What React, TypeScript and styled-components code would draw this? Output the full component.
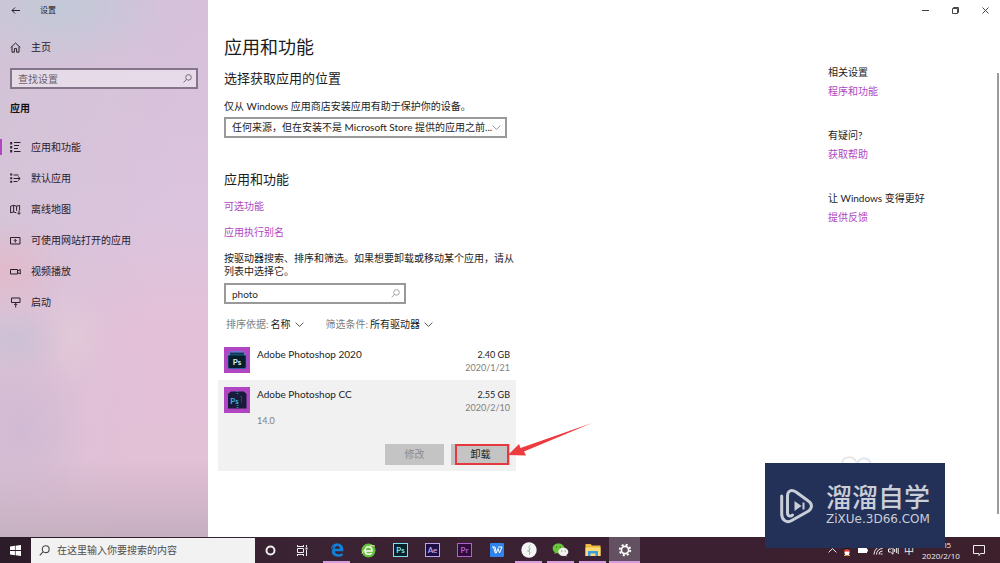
import React from 'react';
import styled, { createGlobalStyle, css } from 'styled-components';

const ACCENT = '#b146c2';

const GlobalStyle = createGlobalStyle`
  * { box-sizing: border-box; }
  body {
    margin: 0;
    background: #fff;
    color: #1c1c1c;
    font: 10px/13px Lato, "Noto Sans CJK SC", sans-serif;
  }
  button, input, select { font: inherit; color: inherit; border: 0; margin: 0; padding: 0; border-radius: 0; background: none; }
  h1, h2, h3, p, ul { margin: 0; padding: 0; font-weight: 400; }
  ul { list-style: none; }
  svg { display: block; flex: none; }
`;

const Desktop = styled.div`
  position: relative;
  display: flex;
  flex-direction: column;
  min-height: 100vh;
`;

const SettingsWindow = styled.div`
  display: flex;
  flex: 1;
`;

/* ---------- sidebar ---------- */

const Sidebar = styled.nav`
  width: 208px;
  flex: none;
  color: #2a2029;
  background:
    linear-gradient(to top, rgba(190, 172, 186, 0.75), rgba(200, 176, 194, 0.5) 36px, rgba(200, 176, 194, 0) 76px),
    radial-gradient(ellipse 110px 60px at 60px 8px, rgba(192, 202, 216, 0.9), rgba(192, 202, 216, 0) 100%),
    radial-gradient(ellipse 60px 50px at 8px 270px, rgba(228, 184, 200, 0.8), rgba(228, 184, 200, 0) 100%),
    radial-gradient(ellipse 50px 34px at 16px 340px, rgba(200, 192, 212, 0.8), rgba(200, 192, 212, 0) 100%),
    radial-gradient(ellipse 36px 50px at 72px 335px, rgba(226, 204, 216, 0.7), rgba(226, 204, 216, 0) 100%),
    radial-gradient(ellipse 70px 90px at 20px 430px, rgba(206, 184, 210, 0.8), rgba(206, 184, 210, 0) 100%),
    linear-gradient(100deg, rgba(210, 196, 214, 0.8), rgba(216, 196, 216, 0) 70%),
    linear-gradient(to bottom, #d6c0da, #dcc4de 40%, #e4c0d8 62%, #e2c0d6 85%, #dcbcd2);
`;

const TitleBar = styled.div`
  display: flex;
  align-items: center;
  height: 21px;
`;

const BackButton = styled.button`
  width: 30px;
  height: 21px;
  display: grid;
  place-items: center;
`;

const WindowName = styled.span`
  padding-left: 10px;
  font-size: 8px;
`;

const NavLink = styled.a<{ $current?: boolean }>`
  display: flex;
  align-items: center;
  gap: 10px;
  height: 31px;
  padding-left: 8px;
  border-left: 2px solid transparent;
  color: inherit;
  text-decoration: none;
  ${(p) =>
    p.$current &&
    css`
      border-image: linear-gradient(transparent 7px, ${ACCENT} 7px, ${ACCENT} 23px, transparent 23px) 0 0 0 2;
    `}
`;

const HomeArea = styled.div`
  padding: 11px 0 5px;
`;

const SearchField = styled.div<{ $soft?: boolean }>`
  display: flex;
  align-items: center;
  height: 21px;
  padding: 0 4px 0 6px;
  border: 2px solid ${(p) => (p.$soft ? '#85758a' : '#999')};
  background: ${(p) => (p.$soft ? 'rgba(255,255,255,0.4)' : '#fff')};
  color: ${(p) => (p.$soft ? '#6d606e' : '#999')};
  input {
    flex: 1;
    min-width: 0;
    height: 17px;
    outline: none;
    color: #2a2a2a;
  }
  input::placeholder { color: #6d606e; opacity: 1; }
`;

const SidebarSearch = styled.div`
  padding: 0 10px;
`;

const SidebarHeading = styled.h2`
  padding: 13px 10px 17px;
  font-size: 10px;
  font-weight: 700;
  color: #111;
`;

/* ---------- main pane ---------- */

const Main = styled.main`
  display: flex;
  flex: 1;
  flex-direction: column;
  min-width: 0;
`;

const Caption = styled(TitleBar)`
  justify-content: flex-end;
  color: #444;
`;

const CaptionButton = styled.button`
  width: 30px;
  height: 21px;
  display: grid;
  place-items: center;
`;

const Body = styled.div`
  display: flex;
  flex: 1;
  justify-content: space-between;
`;

const Content = styled.div`
  width: 308px;
  padding: 13px 0 40px 10px;
`;

const Block = styled.div`
  padding-left: 6px;
`;

const PageTitle = styled.h1`
  font-size: 18px;
  line-height: 26px;
`;

const SectionTitle = styled.h2`
  font-size: 13px;
  line-height: 18px;
`;

const TopSection = styled.section`
  padding-top: 9px;
  p { margin: 13px 0 4px; }
`;

const SelectBox = styled.div<{ $boxed?: boolean }>`
  display: flex;
  align-items: center;
  color: ${(p) => (p.$boxed ? '#999' : '#555')};
  ${(p) =>
    p.$boxed &&
    css`
      width: 283px;
      height: 21px;
      border: 2px solid #999;
    `}
  svg { pointer-events: none; margin: 0 4px 0 auto; }
`;

const Select = styled.select<{ $width: number }>`
  appearance: none;
  width: ${(p) => p.$width}px;
  height: 17px;
  color: #1c1c1c;
  white-space: nowrap;
  outline: none;
`;

const SourceSelect = styled(Select)`
  padding-left: 6px;
  flex: none;
`;

const FeatureSection = styled.section`
  padding-top: 32px;
`;

const Link = styled.a`
  display: block;
  width: max-content;
  color: ${ACCENT};
  text-decoration: none;
`;

const LinkList = styled.div`
  display: grid;
  gap: 13px;
  padding: 12px 0 13px;
`;

const Hint = styled.p`
  width: 292px;
  margin-bottom: 5px;
`;

const AppSearch = styled.div`
  width: 182px;
`;

const Filters = styled.div`
  display: flex;
  gap: 18px;
  padding: 12px 0 7px 2px;
`;

const Filter = styled.div`
  display: flex;
  align-items: center;
  gap: 2px;
  label { color: #808080; }
`;

const AppRow = styled.li<{ $selected?: boolean }>`
  display: grid;
  grid-template-columns: 26px 1fr auto;
  column-gap: 7px;
  padding: 7px 6px 6px;
  background: ${(p) => (p.$selected ? '#f1f1f1' : 'transparent')};
`;

const AppIcon = styled.span`
  display: grid;
  place-items: center;
  width: 26px;
  height: 26px;
  background: ${ACCENT};
`;

const AppName = styled.div`
  padding-top: 1px;
`;

const Muted = styled.div`
  color: #808080;
`;

const Version = styled(Muted)`
  padding-top: 13px;
  font-size: 9px;
`;

const Figures = styled.div`
  padding-top: 1px;
  font-size: 9px;
  text-align: right;
`;

const Actions = styled.div`
  grid-column: 1 / -1;
  display: flex;
  justify-content: flex-end;
  gap: 7px;
  padding-top: 17px;
`;

const ActionButton = styled.button`
  position: relative;
  width: 59px;
  height: 21px;
  background: #c4c4c4;
  &:disabled { color: #8c8c8c; }
`;

const RedFrame = styled.span`
  position: absolute;
  inset: 0 1px 0 4px;
  border: 2px solid #e5383f;
`;

const RedArrow = styled.svg`
  position: absolute;
  left: 56px;
  top: -22px;
`;

const Related = styled.aside`
  display: flex;
  margin-left: auto;
  width: 172px;
`;

const RelatedGroups = styled.div`
  flex: 1;
  padding-top: 45px;
`;

const RelatedGroup = styled.section`
  margin-bottom: 31px;
  h3 { font-size: 10px; line-height: 13px; margin-bottom: 6px; }
`;

const ScrollThumb = styled.div`
  width: 2px;
  margin: 52px 1px 23px 0;
  background: #9b9b9b;
`;

/* ---------- taskbar ---------- */

const Taskbar = styled.footer`
  display: flex;
  align-items: stretch;
  height: 26px;
  color: #eee;
  background: linear-gradient(to right, #2c1b28, #3a2333 30%, #3b2032 70%, #3d202c);
`;

const StartButton = styled.button`
  width: 31px;
  display: grid;
  place-items: center;
`;

const TaskSearch = styled.label`
  display: flex;
  align-items: center;
  gap: 7px;
  width: 224px;
  margin: 1px 0 0;
  padding-left: 8px;
  background: #f2f2f2;
  color: #444;
  input { flex: 1; min-width: 0; outline: none; }
  input::placeholder { color: #4c4c4c; opacity: 1; }
`;

const TaskGroup = styled.div`
  display: flex;
  gap: 1px;
`;

const PinnedGroup = styled(TaskGroup)`
  margin-left: 3px;
`;

const TaskButton = styled.button<{ $running?: boolean; $active?: boolean }>`
  display: grid;
  place-items: center;
  width: 31px;
  background: ${(p) => (p.$active ? '#635060' : 'transparent')};
  ${(p) =>
    p.$running &&
    css`
      background-image: linear-gradient(#d79be0, #d79be0);
      background-size: ${p.$active ? 31 : 27}px 2px;
      background-repeat: no-repeat;
      background-position: center bottom;
    `}
`;

const AdobeTile = styled.span<{ $tone: string; $fill: string }>`
  width: 15px;
  height: 14px;
  border: 1px solid ${(p) => p.$tone};
  background: ${(p) => p.$fill};
  color: ${(p) => p.$tone};
  font-size: 8px;
  line-height: 12px;
  font-weight: 700;
  text-align: center;
`;

const Tray = styled.div`
  display: flex;
  align-items: center;
  margin-left: auto;
  padding-right: 15px;
`;

const TrayIcons = styled.div`
  display: flex;
  align-items: center;
  gap: 5px;
`;

const Clock = styled.div`
  width: 54px;
  margin: 0 5px 0 0;
  font-family: "Open Sans", sans-serif;
  font-size: 8px;
  line-height: 11px;
  text-align: center;
`;

/* ---------- watermark ---------- */

const Watermark = styled.div`
  position: absolute;
  right: 55px;
  bottom: 15px;
  display: flex;
  align-items: center;
  gap: 12px;
  width: 180px;
  height: 85px;
  padding-left: 15px;
  background: #233057;
  color: #c9ced8;
`;

const WatermarkText = styled.div`
  padding-bottom: 4px;
`;

const WatermarkName = styled.div`
  font: 500 26px/28px "Noto Sans CJK SC", sans-serif;
`;

const WatermarkUrl = styled.div`
  padding-top: 2px;
  font: 12px/14px "DejaVu Sans", sans-serif;
`;

const WatermarkCloud = styled.svg`
  position: absolute;
  right: 126px;
  bottom: 99px;
`;

/* ---------- icons ---------- */

const Line = ({ children, w = 11, h = 11, sw = 1 }: { children: React.ReactNode; w?: number; h?: number; sw?: number }) => (
  <svg width={w} height={h} viewBox={`0 0 ${w} ${h}`} fill="none" stroke="currentColor" strokeWidth={sw} aria-hidden="true">
    {children}
  </svg>
);

const Magnifier = ({ size = 9 }: { size?: number }) => (
  <svg width={size} height={size} viewBox="0 0 9 9" fill="none" stroke="currentColor" strokeWidth="0.9" aria-hidden="true">
    <circle cx="5.5" cy="3.4" r="2.8" />
    <path d="M3.5 5.4 0.6 8.4" />
  </svg>
);

const Chevron = () => (
  <Line w={9} h={5}><path d="M0.6 0.6 4.5 4.4 8.4 0.6" /></Line>
);

const icons = {
  home: <Line><path d="M0.7 5.6 5.5 1l4.8 4.6M2 4.6v5.6h2.4V6.6h2.2v3.6H9V4.6" /></Line>,
  apps: <Line><path d="M1.2 0v2.400M1.200 4v2.400M1.200 8v2.400" strokeWidth="2" /><path d="M4 .5h6.500M4 3.500h5M4 6.500h4M4 9.500h6.500" /></Line>,
  defaults: <Line><path d="M1.200 .6v2M1.200 4.200v2M1.200 7.800v2" strokeWidth="2" /><path d="M3.500 2h5M3.500 5.500h6.500M3.500 8.500h4M8 3.500l2.200 2L8 7.500" /></Line>,
  maps: <Line><path d="M.6 2.200 3.600 1.400l3 .8 3-.8v5M.6 2.200v6.600l3-.8 2.600.7M3.600 1.400V8M6.600 2.200v4.600M9 6.600v3.600M7.400 8.700 9 10.300l1.600-1.600" /></Line>,
  sites: <Line><path d="M.5 2.500h9.500v6.500H.5zM5.300 7.600V4.500M3.900 5.800l1.400-1.400 1.400 1.400" /></Line>,
  video: <Line><path d="M.5 3.500h7v4.500h-7zM7.500 5l2.800-1.500V8L7.500 6.500" /></Line>,
  startup: <Line><path d="M1.500 1h8.500v4.500H1.500zM5.700 5.500" /><path d="M5.700 10.500v-4M4.200 8l1.500-1.500L7.200 8" /></Line>,
};

const BoxPhotoshop2020 = () => (
  <svg width="20" height="18" viewBox="0 0 20 18" aria-hidden="true">
    <path d="M3 1h14M1.500 3.200h17" stroke="#2aa5e8" strokeWidth="1.2" />
    <path d="M3 1.6h14V4H3z" fill="#12384f" />
    <rect x="1" y="4" width="18" height="13.5" rx="1.5" fill="#071d29" stroke="#1f7fb8" strokeWidth="0.6" />
    <text x="10" y="13.6" textAnchor="middle" fontSize="8" fontWeight="700" fill="#d8f1fb">Ps</text>
  </svg>
);

const BoxPhotoshopCC = () => (
  <svg width="20" height="20" viewBox="0 0 20 20" aria-hidden="true">
    <path d="M1 4 4 1.500h13L19.500 4v14.500H1z" fill="#191b3a" />
    <path d="M10.500 1v4M10.500 15v4" stroke="#2c7898" strokeWidth="2" strokeDasharray="1 1" />
    <path d="M13 6.500h1.500v6" stroke="#3b3f63" fill="none" />
    <text x="7.5" y="14" textAnchor="middle" fontSize="8" fontWeight="700" fill="#35b6e8">Ps</text>
  </svg>
);

const EdgeIcon = () => (
  <svg width="14" height="14" viewBox="0 0 14 14" aria-hidden="true">
    <path fill="#1180d8" d="M.8 6.4C1.4 2.6 4 .6 7.2.6c4 0 6.2 2.7 6.2 6v1.6H4.7c.1 2 1.9 3 4 3 1.500 0 2.900-.4 4-1v2.500c-1.300.7-2.900 1-4.600 1-3.900 0-6.300-2.100-6.300-5.200 0-2.200 1.300-4 3.300-5C3.300 4 1.700 5 .8 6.400ZM4.800 5.800h4.900c0-1.700-.8-2.700-2.300-2.700-1.400 0-2.400 1.100-2.600 2.700Z" />
  </svg>
);

const GreenBrowser = () => (
  <svg width="15" height="15" viewBox="0 0 15 15" aria-hidden="true">
    <circle cx="7.500" cy="7.500" r="7" fill="#65c23c" />
    <path d="M4 8h7c.2-2.600-1.300-4.200-3.500-4.200S4 5.500 4 7.600s1.500 3.700 3.700 3.700c1.300 0 2.300-.5 3-1.300" fill="none" stroke="#fff" strokeWidth="1.600" />
    <path d="M1 10.500C3 5 9 1.500 14 3" fill="none" stroke="#d9f3a0" />
  </svg>
);

const WpsIcon = () => (
  <svg width="14" height="14" viewBox="0 0 14 14" aria-hidden="true">
    <rect width="14" height="14" rx="1" fill="#2f83ea" />
    <path d="M2 4h3l1.300 6L8 5.500 9.500 10 12 4H8M3.500 4l1.800 6h1" fill="none" stroke="#fff" />
  </svg>
);

const WhiteDisc = () => (
  <svg width="16" height="16" viewBox="0 0 16 16" aria-hidden="true">
    <circle cx="8" cy="8" r="7.700" fill="#f4f6f6" />
    <path d="M9.500 2.500 7.500 5.500l2 1-2.500 2M8.500 6v7M6 8.500l3.500 2" fill="none" stroke="#a9bdb8" />
  </svg>
);

const WeChat = () => (
  <svg width="17" height="14" viewBox="0 0 17 14" aria-hidden="true">
    <path d="M6.500.6C3.200.6.700 2.700.700 5.400c0 1.500.8 2.800 2.100 3.700l-.5 1.800 2.100-1c3.700 1 7.900-1 7.900-4.500C12.300 2.700 9.800.600 6.500.600Z" fill="#68c63a" />
    <path d="M11.400 4.800c-2.900 0-5.100 1.800-5.100 4.100 0 2.700 3.100 4.700 6.600 3.800l1.800.9-.4-1.500c1.200-.8 2-1.900 2-3.200 0-2.300-2.200-4.100-4.900-4.100Z" fill="#f0f3ec" />
    <path d="M4.500 3.500v1M8.200 3.500v1" stroke="#2c5a1d" />
    <path d="M9.800 7.500v1M13.200 7.500v1" stroke="#6c6c6c" />
  </svg>
);

const Explorer = () => (
  <svg width="16" height="14" viewBox="0 0 16 14" aria-hidden="true">
    <path d="M.5 1h5l1.500 1.500h8.500V13H.5z" fill="#f0b93c" />
    <path d="M.5 4.500h15V13H.5z" fill="#fbdc78" />
    <path d="M3 13V8h10v5h-2.500v-2.500h-5V13z" fill="#3a9be0" />
  </svg>
);

const Gear = () => (
  <svg width="14" height="14" viewBox="0 0 14 14" fill="none" stroke="#fff" aria-hidden="true">
    <circle cx="7" cy="7" r="3.600" strokeWidth="1.700" />
    <circle cx="7" cy="7" r="5.300" strokeWidth="1.800" strokeDasharray="2.080 2.080" />
  </svg>
);

const navItems = [
  { icon: icons.apps, label: '应用和功能', current: true },
  { icon: icons.defaults, label: '默认应用' },
  { icon: icons.maps, label: '离线地图' },
  { icon: icons.sites, label: '可使用网站打开的应用' },
  { icon: icons.video, label: '视频播放' },
  { icon: icons.startup, label: '启动' },
];

const related = [
  { title: '相关设置', link: '程序和功能' },
  { title: '有疑问?', link: '获取帮助' },
  { title: '让 Windows 变得更好', link: '提供反馈' },
];

const pinned = [
  { name: 'Edge', icon: <EdgeIcon />, running: true },
  { name: '浏览器', icon: <GreenBrowser /> },
  { name: 'Photoshop', icon: <AdobeTile $tone="#7fe0ee" $fill="#06222c">Ps</AdobeTile> },
  { name: 'After Effects', icon: <AdobeTile $tone="#b9a2ee" $fill="#1e0f45">Ae</AdobeTile> },
  { name: 'Premiere', icon: <AdobeTile $tone="#b45fd0" $fill="#2c0d3c">Pr</AdobeTile> },
  { name: 'WPS', icon: <WpsIcon /> },
  { name: '工具', icon: <WhiteDisc />, running: true },
  { name: '微信', icon: <WeChat />, running: true },
  { name: '文件资源管理器', icon: <Explorer />, running: true },
  { name: '设置', icon: <Gear />, running: true, active: true },
];

export default function App() {
  return (
    <>
      <GlobalStyle />
      <Desktop>
        <SettingsWindow>
          <Sidebar>
            <TitleBar>
              <BackButton aria-label="返回"><Line w={9} h={7}><path d="M9 3.500H1M4 .5l-3 3 3 3" /></Line></BackButton>
              <WindowName>设置</WindowName>
            </TitleBar>
            <HomeArea><NavLink href="#home">{icons.home}主页</NavLink></HomeArea>
            <SidebarSearch>
              <SearchField $soft>
                <input aria-label="查找设置" placeholder="查找设置" />
                <Magnifier />
              </SearchField>
            </SidebarSearch>
            <SidebarHeading>应用</SidebarHeading>
            {navItems.map((n) => (
              <NavLink key={n.label} href="#apps" $current={n.current}>{n.icon}{n.label}</NavLink>
            ))}
          </Sidebar>

          <Main>
            <Caption>
              <CaptionButton aria-label="最小化"><Line w={7} h={7}><path d="M0 3.500h7" /></Line></CaptionButton>
              <CaptionButton aria-label="还原"><Line w={7} h={7}><path d="M.5 1.500h5v5h-5zM1.500 1.500v-1h5v5h-1" /></Line></CaptionButton>
              <CaptionButton aria-label="关闭"><Line w={7} h={7}><path d="M.5.5l6 6M6.500.5l-6 6" /></Line></CaptionButton>
            </Caption>
            <Body>
              <Content>
                <Block>
                  <PageTitle>应用和功能</PageTitle>
                  <TopSection>
                    <SectionTitle>选择获取应用的位置</SectionTitle>
                    <p>仅从 Windows 应用商店安装应用有助于保护你的设备。</p>
                    <SelectBox $boxed>
                      <SourceSelect $width={266} aria-label="选择获取应用的位置">
                        <option>任何来源，但在安装不是 Microsoft Store 提供的应用之前...</option>
                      </SourceSelect>
                      <Chevron />
                    </SelectBox>
                  </TopSection>
                  <FeatureSection>
                    <SectionTitle>应用和功能</SectionTitle>
                    <LinkList>
                      <Link href="#optional">可选功能</Link>
                      <Link href="#alias">应用执行别名</Link>
                    </LinkList>
                    <Hint>按驱动器搜索、排序和筛选。如果想要卸载或移动某个应用，请从列表中选择它。</Hint>
                    <AppSearch>
                      <SearchField>
                        <input aria-label="搜索此列表" defaultValue="photo" />
                        <Magnifier />
                      </SearchField>
                    </AppSearch>
                    <Filters>
                      <Filter>
                        <label htmlFor="sort">排序依据:</label>
                        <SelectBox><Select id="sort" $width={24}><option>名称</option></Select><Chevron /></SelectBox>
                      </Filter>
                      <Filter>
                        <label htmlFor="drive">筛选条件:</label>
                        <SelectBox><Select id="drive" $width={54}><option>所有驱动器</option></Select><Chevron /></SelectBox>
                      </Filter>
                    </Filters>
                  </FeatureSection>
                </Block>
                <ul>
                  <AppRow>
                    <AppIcon><BoxPhotoshop2020 /></AppIcon>
                    <AppName>Adobe Photoshop 2020</AppName>
                    <Figures>2.40 GB<Muted>2020/1/21</Muted></Figures>
                  </AppRow>
                  <AppRow $selected>
                    <AppIcon><BoxPhotoshopCC /></AppIcon>
                    <AppName>Adobe Photoshop CC<Version>14.0</Version></AppName>
                    <Figures>2.55 GB<Muted>2020/2/10</Muted></Figures>
                    <Actions>
                      <ActionButton disabled>修改</ActionButton>
                      <ActionButton>
                        卸载
                        <RedFrame />
                        <RedArrow width="86" height="36" viewBox="0 0 86 36" aria-hidden="true">
                          <path d="M1 33 12 22l1.500 4L85 1 17 29.500l2 4z" fill="#ee3b40" />
                        </RedArrow>
                      </ActionButton>
                    </Actions>
                  </AppRow>
                </ul>
              </Content>
              <Related>
                <RelatedGroups>
                  {related.map((r) => (
                    <RelatedGroup key={r.title}>
                      <h3>{r.title}</h3>
                      <Link href="#related">{r.link}</Link>
                    </RelatedGroup>
                  ))}
                </RelatedGroups>
                <ScrollThumb />
              </Related>
            </Body>
          </Main>
        </SettingsWindow>

        <Taskbar>
          <StartButton aria-label="开始">
            <svg width="11" height="11" viewBox="0 0 11 11" fill="#fff" aria-hidden="true">
              <path d="M0 1.500 4.900.8v4.300H0zM5.600.7 11 0v5.100H5.600zM0 5.900h4.900v4.300L0 9.500zM5.600 5.900H11V11l-5.400-.7z" />
            </svg>
          </StartButton>
          <TaskSearch>
            <Magnifier size={11} />
            <input aria-label="搜索" placeholder="在这里输入你要搜索的内容" />
          </TaskSearch>
          <TaskGroup>
            <TaskButton aria-label="Cortana"><Line sw={2}><circle cx="5.500" cy="5.500" r="4" /></Line></TaskButton>
            <TaskButton aria-label="任务视图">
              <Line><path d="M.5 0v2M6.500 0v2M.5 1.500h6M.5 3.500h6v4h-6zM.5 11V9M6.500 11V9M.5 9.500h6M9.500 0v2M9.500 5v6" /><path d="M8.500 3.500h2" strokeWidth="2" /></Line>
            </TaskButton>
          </TaskGroup>
          <PinnedGroup>
            {pinned.map((t) => (
              <TaskButton key={t.name} aria-label={t.name} $running={t.running} $active={t.active}>{t.icon}</TaskButton>
            ))}
          </PinnedGroup>
          <Tray>
            <TrayIcons>
              <Line w={9} h={5}><path d="M.6 4.400 4.500.6l3.900 3.800" /></Line>
              <svg width="10" height="11" viewBox="0 0 10 11" aria-hidden="true">
                <ellipse cx="5" cy="5" rx="3" ry="4.500" fill="#171717" />
                <ellipse cx="5" cy="7.500" rx="2.500" ry="3" fill="#fff" />
                <path d="M2 5.500h6" stroke="#e0352b" strokeWidth="2" />
                <path d="M2 10.500h2.500M5.500 10.500H8" stroke="#f2a12b" />
              </svg>
              <svg width="11" height="7" viewBox="0 0 11 7" fill="#fff" aria-hidden="true"><path d="M1 1h9v1.500h1v2h-1V6H1z" /></svg>
              <Line w={10} h={10}><path d="M1 9.500A8.500 8.500 0 0 1 9.500 1M3.500 9.500a6 6 0 0 1 6-6M6 9.500A3.500 3.500 0 0 1 9.500 6" /><path d="M8.500 8.500v1" strokeWidth="2" /></Line>
              <Line w={11} h={9}><path d="M.5 3h2L5 .8v7.400L2.500 6h-2zM6.600 3v3M8.400 2v5M10.200 1v7" /></Line>
              <span>中</span>
            </TrayIcons>
            <Clock>14:05<br />2020/2/10</Clock>
            <Line w={12} h={12}><path d="M.5 1.500h11v8h-4l-1.500 2v-2H.5z" /></Line>
          </Tray>
        </Taskbar>

        <WatermarkCloud width="34" height="8" viewBox="0 0 34 8" fill="none" strokeWidth="2" aria-hidden="true">
          <path d="M2 8c0-8 12-9 14-2" stroke="#e9e6e4" />
          <path d="M17 8c2-7 11-8 14 0" stroke="#dfe5f0" />
        </WatermarkCloud>
        <Watermark>
          <svg width="34" height="36" viewBox="0 0 34 36" fill="none" stroke="currentColor" strokeWidth="3" strokeLinecap="round" strokeLinejoin="round" aria-hidden="true">
            <path d="M1.700 8v18c0 6 5 9.500 10 6.500l16-9c5-3 5-8 0-11L16 4C11 1 7.500 3 7.500 8v17c0 3 3 4 5 2" />
            <path d="M14.500 13v10l7-5z" fill="currentColor" stroke="none" />
            <path d="M23.500 14.500v7" strokeWidth="2" strokeLinecap="butt" />
          </svg>
          <WatermarkText>
            <WatermarkName>溜溜自学</WatermarkName>
            <WatermarkUrl>ZiXUe.3D66.COM</WatermarkUrl>
          </WatermarkText>
        </Watermark>
      </Desktop>
    </>
  );
}
